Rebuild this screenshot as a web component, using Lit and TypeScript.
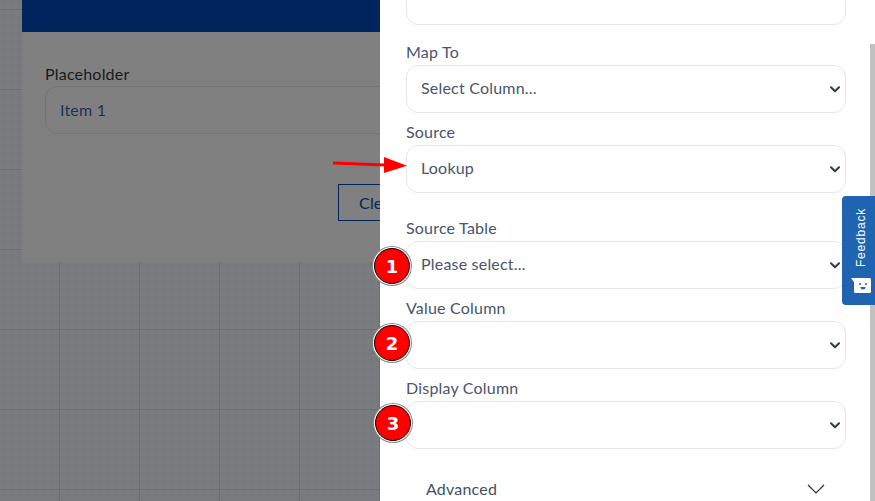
import { LitElement, html, css } from 'lit';
import { customElement } from 'lit/decorators.js';

const chevron = html`<svg class="chev" width="10" height="7" viewBox="0 0 10 7"><path d="M1 1.2l4 4 4-4" fill="none" stroke="#2b3a4d" stroke-width="2" stroke-linecap="round" stroke-linejoin="round"/></svg>`;

@customElement('app-root')
export class AppRoot extends LitElement {
  static styles = css`
    :host {
      display: block;
      width: 875px;
      height: 501px;
      overflow: hidden;
      position: relative;
      font-family: 'Lato', 'Open Sans', sans-serif;
      font-size: 16px;
      letter-spacing: 0.2px;
      color: #4a5568;
    }

    .page {
      display: flex;
      height: 501px;
    }

    .canvas {
      width: 380px;
      flex: none;
      overflow: hidden;
      background-color: #797b7e;
      background-image:
        linear-gradient(#6c6e71 1px, transparent 1px),
        linear-gradient(90deg, #6c6e71 1px, transparent 1px),
        linear-gradient(#75777a 1px, transparent 1px),
        linear-gradient(90deg, #75777a 1px, transparent 1px);
      background-size: 80px 80px, 80px 80px, 8px 8px, 8px 8px;
      background-position: 59px 9px, 59px 9px, 3px 1px, 3px 1px;
    }

    .dialog {
      margin-left: 22px;
      width: 500px;
      height: 262px;
      background: #808080;
      color: #1a1a1a;
    }

    .dialog-head {
      height: 32px;
      background: #00255c;
    }

    .dialog-body {
      padding: 32px 23px 0;
    }

    .dialog-label {
      height: 22px;
      line-height: 19px;
    }

    .dialog-input {
      height: 46px;
      border: 1px solid #747474;
      border-radius: 12px;
      padding: 0 14px;
      line-height: 46px;
      color: #1d3350;
    }

    .clear {
      margin: 50px 0 0 293px;
      width: 120px;
      height: 35px;
      border: 1px solid #00255c;
      color: #00255c;
      line-height: 35px;
      padding-left: 20px;
    }

    .panel {
      flex: 1;
      background: #fff;
      padding: 0 29px 0 26px;
      margin-top: -23px;
    }

    .field.gap {
      margin-bottom: 16px;
    }

    .field label {
      display: block;
      height: 32px;
      line-height: 20px;
      padding-top: 9px;
      box-sizing: border-box;
    }

    .select {
      height: 48px;
      box-sizing: border-box;
      border: 1px solid #e5e7eb;
      border-radius: 12px;
      padding: 0 5px 0 14px;
      display: flex;
      align-items: center;
      justify-content: space-between;
    }

    .select span {
      margin-top: -3px;
    }

    .select.first {
      margin-bottom: 8px;
    }

    .chev {
      flex: none;
    }

    .advanced {
      display: flex;
      justify-content: space-between;
      align-items: center;
      padding: 30px 21px 0 20px;
      color: #44505f;
    }

    .scrollbar {
      position: absolute;
      right: 0;
      top: 44px;
      width: 5px;
      height: 457px;
      background: #c1c1c1;
    }

    .arrow {
      position: absolute;
      left: 330px;
      top: 154px;
    }

    .badge {
      position: absolute;
      width: 36px;
      height: 36px;
      box-sizing: border-box;
      border-radius: 50%;
      background: #fe0000;
      color: #fff;
      border: 1.5px solid #000;
      box-shadow: 0 0 0 1px #fff, 0 0 0 2px #8a8a8a;
      display: flex;
      align-items: center;
      justify-content: center;
      font: bold 18px 'DejaVu Sans', sans-serif;
      letter-spacing: 0;
    }

    .feedback {
      position: absolute;
      left: 842px;
      top: 196px;
      width: 33px;
      height: 109px;
      box-sizing: border-box;
      background: #1f64b0;
      border-radius: 4px 0 0 4px;
      display: flex;
      flex-direction: column;
      align-items: center;
      padding: 12px 0 0 5px;
      gap: 11px;
      color: #fff;
    }

    .feedback span {
      writing-mode: vertical-rl;
      transform: rotate(180deg);
      font: 12px 'Liberation Sans', sans-serif;
      letter-spacing: 0.8px;
      line-height: 16px;
    }
  `;

  private renderField(label: string, value: string, gap = false) {
    return html`
      <div class="field ${gap ? 'gap' : ''}">
        <label>${label}</label>
        <div class="select"><span>${value}</span>${chevron}</div>
      </div>
    `;
  }

  render() {
    return html`
      <div class="page">
        <div class="canvas">
          <div class="dialog">
            <div class="dialog-head"></div>
            <div class="dialog-body">
              <div class="dialog-label">Placeholder</div>
              <div class="dialog-input">Item 1</div>
              <div class="clear">Clear</div>
            </div>
          </div>
        </div>
        <div class="panel">
          <div class="select first"></div>
          ${this.renderField('Map To', 'Select Column...')}
          ${this.renderField('Source', 'Lookup', true)}
          ${this.renderField('Source Table', 'Please select...')}
          ${this.renderField('Value Column', '')}
          ${this.renderField('Display Column', '')}
          <div class="advanced">
            <span>Advanced</span>
            <svg width="18" height="10" viewBox="0 0 18 10"><path d="M1 1l8 8 8-8" fill="none" stroke="#333" stroke-width="1.2"/></svg>
          </div>
        </div>
      </div>
      <div class="scrollbar"></div>
      <svg class="arrow" width="80" height="22" viewBox="0 0 80 22">
        <path d="M3 7.500L55 9.500V12.500L3 10.500Z" fill="#f00"/>
        <path d="M54 3L77 11.700L54 19Z" fill="#f00"/>
      </svg>
      <div class="badge" style="left:374px;top:248px">1</div>
      <div class="badge" style="left:374px;top:325px">2</div>
      <div class="badge" style="left:375px;top:405px">3</div>
      <div class="feedback">
        <span>Feedback</span>
        <svg width="20" height="15" viewBox="0 0 20 15">
          <path d="M0 0H18.500a1.500 1.500 0 0 1 1.500 1.500V13.500a1.500 1.500 0 0 1-1.500 1.500H4.500a1.500 1.500 0 0 1-1.500-1.500V4Z" fill="#fff"/>
          <circle cx="9" cy="6" r="1" fill="#1f64b0"/>
          <circle cx="15" cy="6" r="1" fill="#1f64b0"/>
          <path d="M9.500 9h5a2.500 2.500 0 0 1-5 0Z" fill="#1f64b0"/>
        </svg>
      </div>
    `;
  }
}

declare global {
  interface HTMLElementTagNameMap {
    'app-root': AppRoot;
  }
}
